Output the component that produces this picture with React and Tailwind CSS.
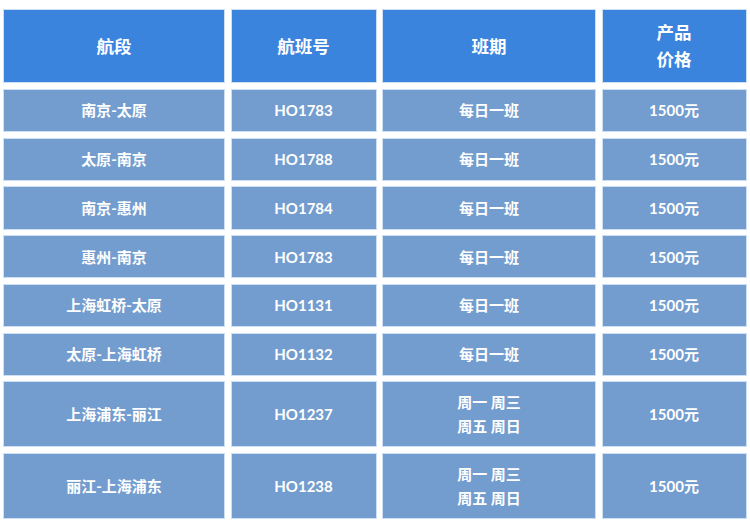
import React from "react";

const rows = [
  ["南京-太原", "HO1783", "每日一班", "1500元"],
  ["太原-南京", "HO1788", "每日一班", "1500元"],
  ["南京-惠州", "HO1784", "每日一班", "1500元"],
  ["惠州-南京", "HO1783", "每日一班", "1500元"],
  ["上海虹桥-太原", "HO1131", "每日一班", "1500元"],
  ["太原-上海虹桥", "HO1132", "每日一班", "1500元"],
  ["上海浦东-丽江", "HO1237", ["周一 周三", "周五 周日"], "1500元"],
  ["丽江-上海浦东", "HO1238", ["周一 周三", "周五 周日"], "1500元"],
];

const font = { fontFamily: "Lato, 'Noto Sans CJK SC', sans-serif" };

function Cell({ children, head }) {
  return (
    <div
      className={
        "flex flex-col items-center justify-center text-center text-white font-bold border border-[#cddff2] " +
        (head
          ? "bg-[#3a84de] text-[17.5px] leading-[27px]"
          : "bg-[#739dce] text-[15px] leading-[24px]")
      }
    >
      {children}
    </div>
  );
}

export default function App() {
  return (
    <div className="w-[750px] h-[522px] bg-white overflow-hidden pl-[3px] pt-[9.3px]" style={font}>
      <div className="grid grid-cols-[222px_146px_214px_145px] grid-rows-[74px_repeat(6,43.25px)_66px_66px] gap-[5.5px]">
        <Cell head>航段</Cell>
        <Cell head>航班号</Cell>
        <Cell head>班期</Cell>
        <Cell head>
          <span>产品</span>
          <span>价格</span>
        </Cell>
        {rows.map((r, i) => (
          <React.Fragment key={i}>
            <Cell>{r[0]}</Cell>
            <Cell>{r[1]}</Cell>
            <Cell>
              {Array.isArray(r[2]) ? r[2].map((l, j) => <span key={j}>{l}</span>) : r[2]}
            </Cell>
            <Cell>{r[3]}</Cell>
          </React.Fragment>
        ))}
      </div>
    </div>
  );
}
